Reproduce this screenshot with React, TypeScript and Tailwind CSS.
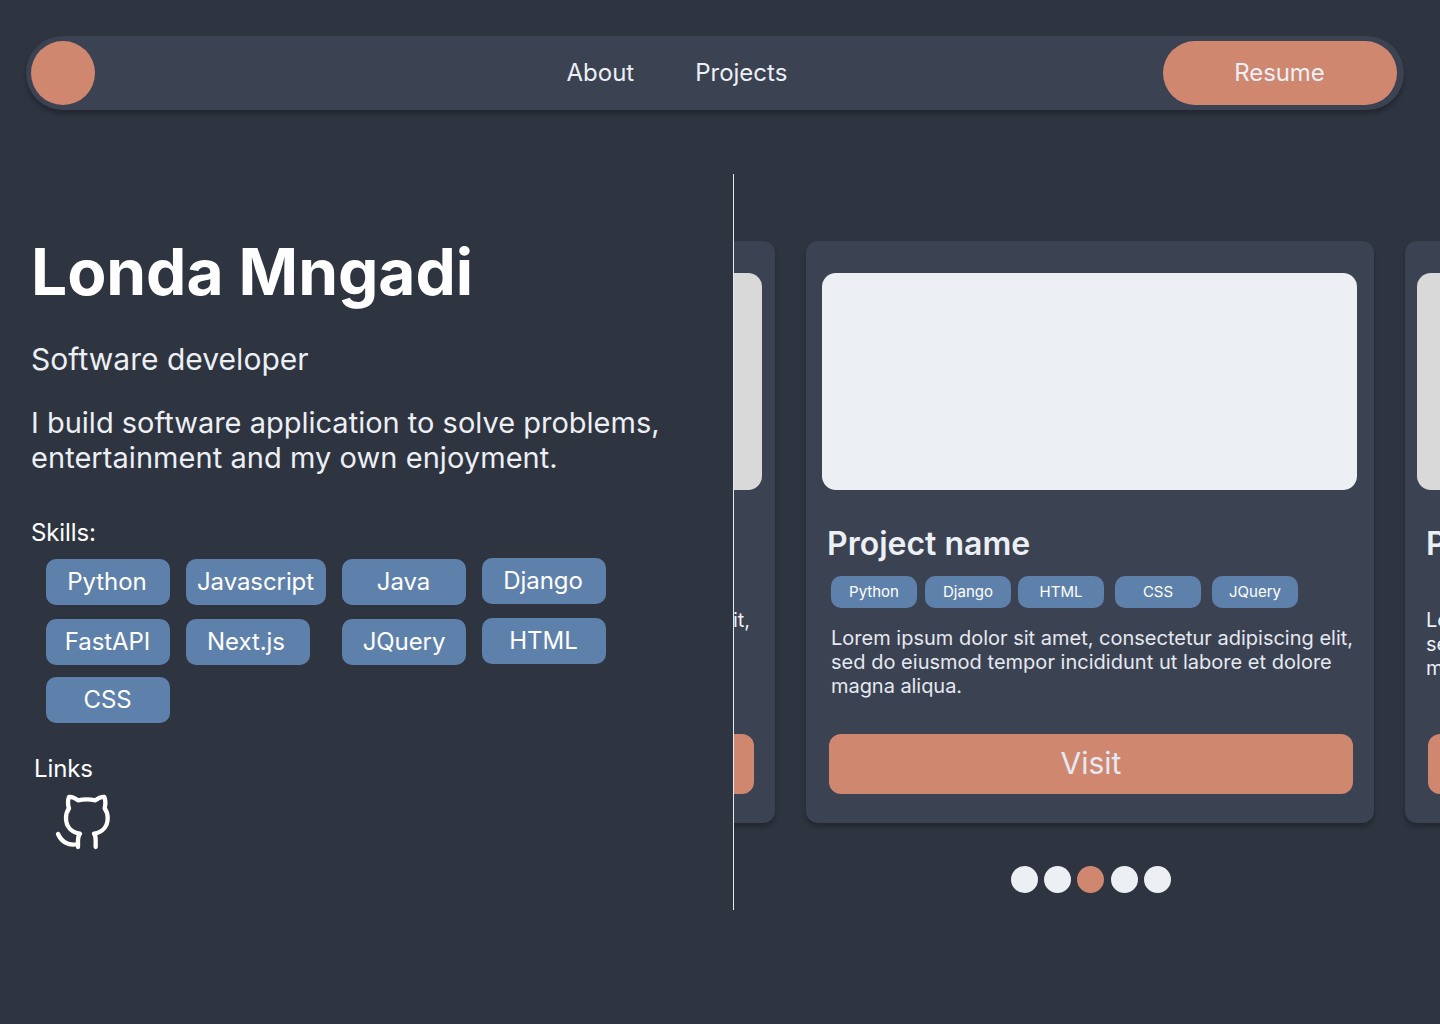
function Pill({ label, className = 'w-[124px]' }: { label: string; className?: string }) {
  return (
    <div className={`flex h-[46px] items-center justify-center rounded-[10px] bg-[#5E81AC] pb-0.5 text-2xl leading-[29px] tracking-[-0.08px] text-white ${className}`}>
      {label}
    </div>
  );
}

function Tag({ label, className = '' }: { label: string; className?: string }) {
  return (
    <div className={`flex h-8 w-[86px] items-center justify-center rounded-[10px] bg-[#5E81AC] text-[15px] text-white ${className}`}>
      {label}
    </div>
  );
}

function SideCard({ className = '', image = '', text = '' }: { className?: string; image?: string; text?: string }) {
  return (
    <article className={`h-[582px] w-[568px] shrink-0 rounded-[12px] bg-[#3B4252] pt-8 shadow-[0_4px_4px_rgba(0,0,0,0.25)] ${className}`}>
      <div className={`h-[217px] w-[535px] rounded-[14px] bg-[#D9D9D9] ${image}`} />
      <div className={text}>
        <h2 className="mt-[34px] text-[32px] leading-[39px] font-semibold text-[#ECEFF4]">Project name</h2>
        <p className="mt-[45px] h-[72px] text-xl leading-6 whitespace-nowrap text-[#ECEFF4]">
          Lorem ipsum dolor sit amet, consectetur adipiscing elit,<br />
          sed do eiusmod tempor incididunt ut labore et dolore<br />
          magna aliqua.
        </p>
      </div>
      <div className="mt-[54px] ml-[23px] h-[60px] w-[524px] rounded-[12px] bg-[#D08770]" />
    </article>
  );
}

function GithubMark() {
  return (
    <svg className="mt-[7px] ml-[19px] h-16 w-[66px]" viewBox="0 0 198 192" fill="none" stroke="white" strokeWidth="13" strokeLinecap="round" strokeLinejoin="round">
      <path d="M84 171V150C84 141 86 136 90 131C64 127 48 110 48 84C48 72 51 63 57 55C53 43 53 31 57 21C66 20 76 25 84 31C101 27 119 27 136 31C144 25 154 20 163 21C167 31 167 43 164 55C170 63 173 72 173 84C173 110 157 127 132 131C136 136 137 141 137 150V171" />
      <path d="M24 132C34 154 54 169 83 162" />
    </svg>
  );
}

export default function App() {
  return (
    <div className="flex h-[1024px] w-[1440px] flex-col overflow-hidden bg-[#2E3440] font-['Inter',sans-serif]">
      <header className="mt-9 ml-[26px] flex h-[74px] w-[1378px] shrink-0 items-center rounded-full bg-[#3B4252] pr-[7px] pl-[5px] text-2xl leading-[29px] text-[#ECEFF4] shadow-[0_4px_4px_rgba(0,0,0,0.25)]">
        <div className="size-16 rounded-full bg-[#D08770]" />
        <nav className="ml-[471.5px] flex gap-[61px] pb-0.5">
          <a>About</a>
          <a>Projects</a>
        </nav>
        <button className="ml-auto h-16 w-[234px] rounded-full bg-[#D08770] pr-px pb-0.5 tracking-[-0.1px] text-[#ECEFF4]">Resume</button>
      </header>
      <main className="mt-16 flex h-[736px] shrink-0">
        <section className="flex w-[733px] shrink-0 flex-col pl-[31px] text-[#ECEFF4]">
          <h1 className="mt-[59px] text-[64px] leading-[77px] font-bold tracking-[-0.06px] text-white">Londa Mngadi</h1>
          <p className="mt-[31px] text-[30px] leading-[36px] tracking-[0.03px]">Software developer</p>
          <p className="mt-[28px] text-[29px] leading-[35px]">
            I build software application to solve problems,<br />
            <span className="tracking-[0.055px]">entertainment and my own enjoyment.</span>
          </p>
          <h2 className="mt-[43px] text-2xl leading-[29px] tracking-[-0.1px] text-white">Skills:</h2>
          <div className="mt-[11px] ml-[15px] flex h-[164px] items-start">
            <div className="flex w-[140px] flex-col">
              <Pill label="Python" className="mt-px w-[124px] pr-[2px]" />
              <Pill label="FastAPI" className="mt-[14px] w-[124px] pr-px" />
              <Pill label="CSS" className="mt-3 w-[124px] pr-px" />
            </div>
            <div className="flex w-[156px] flex-col">
              <Pill label="Javascript" className="mt-px w-[140px] pr-px" />
              <Pill label="Next.js" className="mt-[14px] w-[124px] pr-[4px]" />
            </div>
            <div className="flex w-[140px] flex-col">
              <Pill label="Java" className="mt-px w-[124px] pr-px" />
              <Pill label="JQuery" className="mt-[14px] w-[124px]" />
            </div>
            <div className="flex flex-col">
              <Pill label="Django" className="w-[124px] pr-[2px]" />
              <Pill label="HTML" className="mt-[14px] w-[124px] pr-px" />
            </div>
          </div>
          <h2 className="mt-[32px] ml-[3px] text-2xl leading-[29px] tracking-[-0.1px] text-white">Links</h2>
          <GithubMark />
        </section>
        <section className="flex w-[707px] flex-col overflow-hidden border-l border-[#E5E9F0]">
          <div className="mt-[67px] flex h-[590px] w-[1800px] shrink-0 -translate-x-[527px] items-start">
            <SideCard image="ml-[20px]" text="ml-[21px]" />
            <article className="ml-[31px] h-[582px] w-[568px] shrink-0 rounded-[12px] bg-[#3B4252] pt-8 shadow-[0_4px_4px_rgba(0,0,0,0.25)]">
              <div className="ml-4 h-[217px] w-[535px] rounded-[14px] bg-[#ECEFF4]" />
              <h2 className="mt-[34px] ml-[21px] text-[32px] leading-[39px] font-semibold text-[#ECEFF4]">Project name</h2>
              <div className="mt-[13px] ml-[25px] flex">
                <Tag label="Python" />
                <Tag label="Django" className="ml-2" />
                <Tag label="HTML" className="ml-[7px]" />
                <Tag label="CSS" className="ml-[11px]" />
                <Tag label="JQuery" className="ml-[11px]" />
              </div>
              <p className="mt-[18px] ml-[25px] text-xl leading-6 whitespace-nowrap text-[#E5E9F0]">
                Lorem ipsum dolor sit amet, consectetur adipiscing elit,<br />
                <span className="tracking-[0.02px]">sed do eiusmod tempor incididunt ut labore et dolore</span><br />
                <span className="tracking-[-0.05px]">magna aliqua.</span>
              </p>
              <button className="mt-[36px] ml-[23px] block h-[60px] w-[524px] rounded-[12px] bg-[#D08770] pb-0.5 text-[30px] leading-[36px] text-[#E5E9F0]">Visit</button>
            </article>
            <SideCard className="ml-[31px]" image="ml-3" text="ml-[21px]" />
          </div>
          <div className="mt-[35px] ml-[277px] flex gap-[6.2px]">
            <span className="size-[27px] rounded-full bg-[#ECEFF4]" />
            <span className="size-[27px] rounded-full bg-[#ECEFF4]" />
            <span className="size-[27px] rounded-full bg-[#D08770]" />
            <span className="size-[27px] rounded-full bg-[#ECEFF4]" />
            <span className="size-[27px] rounded-full bg-[#ECEFF4]" />
          </div>
        </section>
      </main>
    </div>
  );
}
